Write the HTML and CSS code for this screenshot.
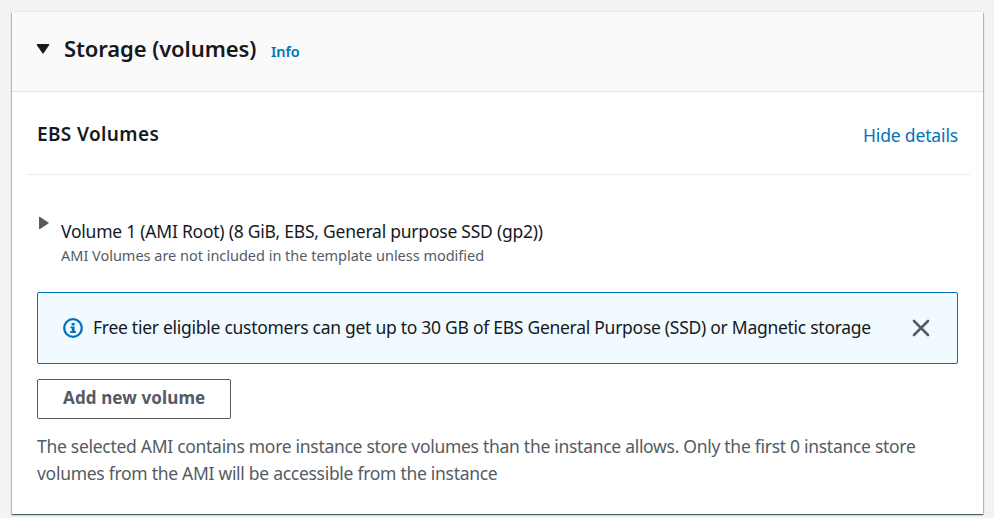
FILE: index.html
```html
<!DOCTYPE html>
<html lang="en">
<head>
<meta charset="utf-8">
<title>Storage (volumes)</title>
<link rel="stylesheet" href="styles.css">
</head>
<body>
<section class="card">
  <header class="card-header">
    <svg class="caret-down" width="14" height="12" viewBox="0 0 14 12"><path d="M1.500 1.800h11L7 9.800z" fill="#16191f" stroke="#16191f" stroke-width="1.400" stroke-linejoin="round"/></svg>
    <h1>Storage (volumes)</h1>
    <a class="info">Info</a>
  </header>
  <div class="card-body">
    <div class="section-head">
      <h2>EBS Volumes</h2>
      <a class="toggle">Hide details</a>
    </div>
    <div class="volume">
      <svg class="caret-right" width="12" height="14" viewBox="0 0 12 14"><path d="M1.700 1.500v11L10 7z" fill="#545b64" stroke="#545b64" stroke-width="1.400" stroke-linejoin="round"/></svg>
      <div>
        <div class="volume-title">Volume 1 (AMI Root) (8 GiB, EBS, General purpose SSD (gp2))</div>
        <div class="volume-note">AMI Volumes are not included in the template unless modified</div>
      </div>
    </div>
    <div class="alert">
      <svg class="alert-icon" width="20" height="20" viewBox="0 0 20 20"><circle cx="10" cy="10" r="8.800" fill="none" stroke="#0073bb" stroke-width="2.300"/><path d="M8.600 5h3v2.400h-3zM7.400 8.400h4.200v4.700h1.300V15H7.200v-1.900h1.600v-2.800H7.400z" fill="#0073bb"/></svg>
      <p>Free tier eligible customers can get up to 30 GB of EBS General Purpose (SSD) or Magnetic storage</p>
      <svg class="close" width="18" height="18" viewBox="0 0 18 18"><path d="M2 2l14 14M16 2L2 16" stroke="#545b64" stroke-width="2.600" stroke-linecap="round"/></svg>
    </div>
    <button class="add">Add new volume</button>
    <p class="help">The selected AMI contains more instance store volumes than the instance allows. Only the first 0 instance store<br>volumes from the AMI will be accessible from the instance</p>
  </div>
</section>
</body>
</html>
```
FILE: styles.css
```css
* { box-sizing: border-box; }
body {
  margin: 0;
  padding: 12px 11px 4px 12px;
  height: 518px;
  background: #f2f3f3;
  color: #16191f;
  font-family: "Noto Sans", "Open Sans", sans-serif;
  font-size: 17.5px;
  line-height: 27px;
  white-space: nowrap;
  overflow: hidden;
}
h1, h2, p { margin: 0; }
.card {
  height: 502px;
  background: #fff;
  box-shadow: 0 1px 1px 0 rgba(0, 28, 36, .5), 1px 1px 1px 0 rgba(0, 28, 36, .2), -1px 1px 1px 0 rgba(0, 28, 36, .2), 0 -1px 0 0 #eaeded;
}
.card-header {
  display: flex;
  height: 80px;
  padding: 20px 24px 0;
  background: #fafafa;
  border-bottom: 1px solid #e4e7e7;
}
.caret-down { margin: 11px 14px 0 0; }
h1 { font-size: 22px; line-height: 32px; font-weight: 600; width: 207px; letter-spacing: -.1px; }
.info { font-size: 14.5px; line-height: 38px; font-weight: 600; color: #0073bb; letter-spacing: -.1px; }
.card-body { padding: 0 25px; }
.section-head {
  display: flex;
  justify-content: space-between;
  height: 83px;
  margin: 0 -12px 0 -11px;
  padding: 28px 12px 0 11px;
  border-bottom: 1px solid #eaeded;
}
h2 { font-size: 19px; line-height: 28px; font-weight: 600; letter-spacing: .37px; }
.toggle { color: #0073bb; line-height: 31px; letter-spacing: -.15px; }
.volume { display: flex; height: 117px; padding-top: 43px; }
.caret-right { margin: -2px 11px 0 1px; }
.volume-title { line-height: 27px; letter-spacing: -.235px; }
.volume-note { font-size: 14.5px; line-height: 21px; color: #545b64; letter-spacing: -.015px; }
.alert {
  display: flex;
  align-items: center;
  height: 72px;
  padding: 0 27px 0 25px;
  background: #f1faff;
  border: 1px solid #0073bb;
  border-radius: 2px;
}
.alert p { flex: 1; margin-left: 10px; padding-bottom: 2px; letter-spacing: -.275px; }
.close { flex: none; }
.add {
  display: block;
  width: 194px;
  height: 40px;
  margin: 15px 0 14px;
  padding: 0 0 3px 25px;
  border: 1px solid #545b64;
  border-radius: 2px;
  background: #fff;
  color: #545b64;
  font: 700 17px/27px "Noto Sans", sans-serif;
  text-align: left;
  letter-spacing: .12px;
}
.help { color: #545b64; letter-spacing: -.288px; }
```
